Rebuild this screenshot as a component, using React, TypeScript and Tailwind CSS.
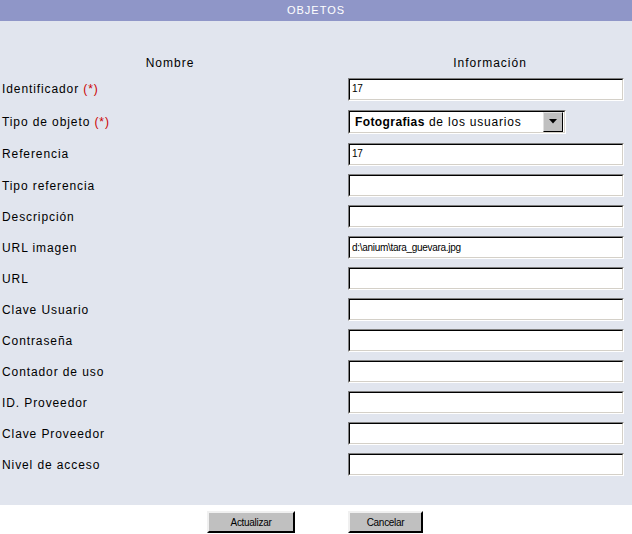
import React from 'react';

const font = { fontFamily: '"Liberation Sans", Arial, sans-serif' };

type Row = { label: string; required?: boolean; value?: string; select?: boolean; h: string };

const rows: Row[] = [
  { label: 'Identificador', required: true, value: '17', h: 'h-[32px]' },
  { label: 'Tipo de objeto', required: true, select: true, h: 'h-[33px]' },
  { label: 'Referencia', value: '17', h: 'h-[32px]' },
  { label: 'Tipo referencia', h: 'h-[31px]' },
  { label: 'Descripción', h: 'h-[31px]' },
  { label: 'URL imagen', value: 'd:\\anium\\tara_guevara.jpg', h: 'h-[31px]' },
  { label: 'URL', h: 'h-[31px]' },
  { label: 'Clave Usuario', h: 'h-[31px]' },
  { label: 'Contraseña', h: 'h-[31px]' },
  { label: 'Contador de uso', h: 'h-[31px]' },
  { label: 'ID. Proveedor', h: 'h-[31px]' },
  { label: 'Clave Proveedor', h: 'h-[31px]' },
  { label: 'Nivel de acceso', h: 'h-[31px]' },
];

function TextBox({ value }: { value?: string }) {
  return (
    <div className="w-[276px] h-[23px] border border-t-[#808080] border-l-[#808080] border-b-white border-r-white">
      <div className="w-full h-full bg-white border border-t-black border-l-black border-b-[#d4d0c8] border-r-[#d4d0c8] flex items-center pl-[2px] text-[10px] text-black tracking-[-0.3px] leading-none">
        {value}
      </div>
    </div>
  );
}

function SelectBox() {
  return (
    <div className="w-[218px] h-[24px] border border-t-[#808080] border-l-[#808080] border-b-white border-r-white">
      <div className="w-full h-full bg-white border border-t-black border-l-black border-b-[#d4d0c8] border-r-[#d4d0c8] flex items-center pl-[5px] pr-[1px]">
        <span className="flex-1 text-[12px] text-black tracking-[0.8px] leading-none">
          <span className="font-semibold tracking-[0.4px]">Fotografias</span> de los usuarios
        </span>
        <div className="w-[20px] h-[20px] bg-[#c0c0c0] border border-t-[#e0e0e0] border-l-[#e0e0e0] border-b-black border-r-black flex items-center justify-center">
          <svg width="8" height="5" viewBox="0 0 8 5">
            <polygon points="0,0 8,0 4,4.5" fill="#000" />
          </svg>
        </div>
      </div>
    </div>
  );
}

function Button({ label, w }: { label: string; w: string }) {
  return (
    <div className={`${w} h-[22px] bg-[#c0c0c0] border-2 border-t-[#f0f0f0] border-l-[#f0f0f0] border-b-black border-r-black flex items-center justify-center text-[10px] text-black tracking-[-0.3px]`}>
      {label}
    </div>
  );
}

export default function App() {
  return (
    <div className="w-[632px] h-[534px] bg-white" style={font}>
      <div className="h-[21px] bg-[#8f96c8] flex items-center justify-center text-white text-[11px] tracking-[1px]">
        OBJETOS
      </div>
      <div className="bg-[#e1e5ee] pt-[32px] pb-[25px]">
        <div className="flex h-[20px] items-center text-[12px] text-black tracking-[1px]">
          <div className="w-[340px] text-center">Nombre</div>
          <div className="w-[292px] text-center pl-[8px]">Información</div>
        </div>
        {rows.map((r) => (
          <div key={r.label} className={`flex items-center ${r.h}`}>
            <div className="w-[348px] pl-[2px] text-[12px] text-black tracking-[0.9px]">
              {r.label}
              {r.required && <span className="text-[#cc0000]"> (*)</span>}
            </div>
            {r.select ? <SelectBox /> : <TextBox value={r.value} />}
          </div>
        ))}
      </div>
      <div className="flex justify-center gap-[53px] pt-[6px] pr-[2px]">
        <Button label="Actualizar" w="w-[88px]" />
        <Button label="Cancelar" w="w-[75px]" />
      </div>
    </div>
  );
}
